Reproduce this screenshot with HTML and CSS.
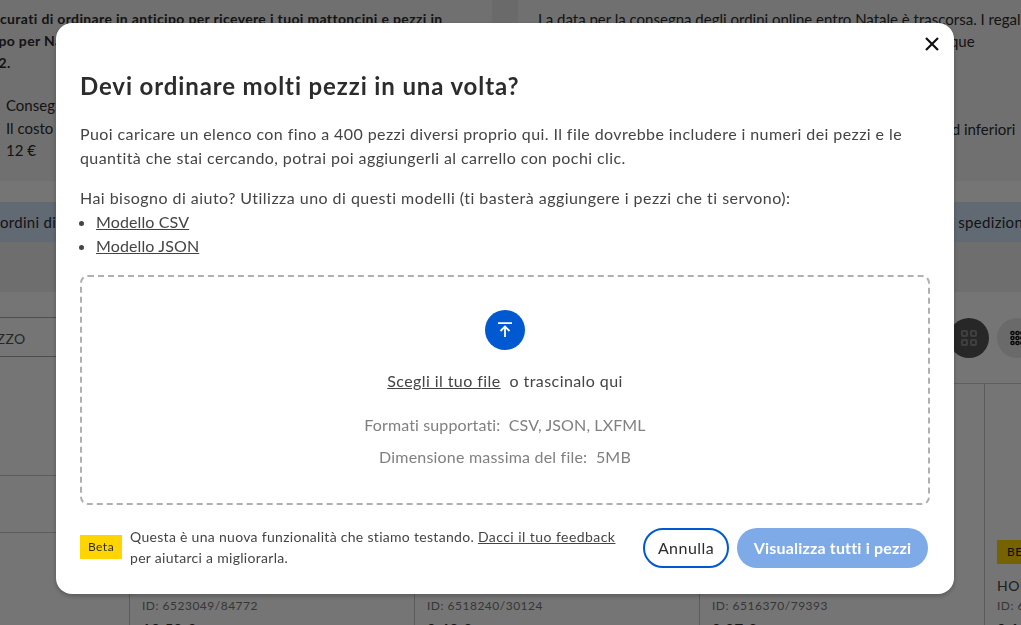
FILE: index.html
```html
<!DOCTYPE html>
<html lang="it">
<head>
    <meta charset="UTF-8">
    <meta name="viewport" content="width=device-width, initial-scale=1.0">
    <title>Devi ordinare molti pezzi in una volta?</title>
    <link rel="stylesheet" href="styles.css">
</head>
<body>

    <!-- Pagina dietro la modale -->
    <div class="page">
        <div class="notices">
            <div class="notice notice-left">
                <div class="notice-strong">
                    <p>Assicurati di ordinare in anticipo per ricevere i tuoi mattoncini e pezzi in</p>
                    <p>tempo per Natale.</p>
                    <p>2022.</p>
                </div>
                <div class="notice-small">
                    <p>Consegna</p>
                    <p>Il costo</p>
                    <p>12 €</p>
                </div>
            </div>
            <div class="notice notice-right">
                <p>La data per la consegna degli ordini online entro Natale è trascorsa. I regali</p>
                <p class="line-que">arriveranno comunque</p>
                <p class="line-inferiori">standard inferiori</p>
            </div>
        </div>
        <div class="info-band">
            <span>ordini di</span>
            <span>spedizioni</span>
        </div>
        <div class="toolbar-band"></div>
        <div class="shop">
            <div class="toolbar">
                <div class="search">Pezzo</div>
                <div class="view-buttons">
                    <span class="view-btn view-btn-on">
                        <svg width="16" height="16" viewBox="0 0 16 16" fill="none" stroke="#8a8a8a" stroke-width="2"><rect x="1" y="1" width="5" height="5" rx="1"/><rect x="10" y="1" width="5" height="5" rx="1"/><rect x="1" y="10" width="5" height="5" rx="1"/><rect x="10" y="10" width="5" height="5" rx="1"/></svg>
                    </span>
                    <span class="view-btn">
                        <svg width="14" height="16" viewBox="0 0 14 16" fill="none" stroke="#111" stroke-width="1.5"><circle cx="2.5" cy="3" r="1.6"/><circle cx="7.500" cy="3" r="1.6"/><circle cx="12.500" cy="3" r="1.6"/><circle cx="2.500" cy="8" r="1.6"/><circle cx="7.500" cy="8" r="1.6"/><circle cx="12.500" cy="8" r="1.6"/><circle cx="2.500" cy="13" r="1.6"/><circle cx="7.500" cy="13" r="1.6"/><circle cx="12.500" cy="13" r="1.6"/></svg>
                    </span>
                </div>
            </div>
            <div class="catalog">
                <div class="filters">
                    <div class="filter"></div>
                    <div class="filter"></div>
                    <div class="filter filter-last">
                        <svg width="14" height="9" viewBox="0 0 14 9" fill="none" stroke="#111" stroke-width="2"><path d="M1 1l6 6 6-6"/></svg>
                    </div>
                </div>
                <div class="products">
                    <div class="product"><p class="product-id">ID: 6523049/84772</p><p class="product-price">10,50 €</p></div>
                    <div class="product"><p class="product-id">ID: 6518240/30124</p><p class="product-price">0,42 €</p></div>
                    <div class="product"><p class="product-id">ID: 6516370/79393</p><p class="product-price">0,07 €</p></div>
                    <div class="product">
                        <span class="product-badge">BEST</span>
                        <p class="product-name">HOLDER</p>
                        <p class="product-id">ID: 6</p>
                        <p class="product-price">0,15 €</p>
                    </div>
                </div>
            </div>
        </div>
    </div>

    <div class="overlay"></div>

    <div class="modal">
        <button class="modal-close" aria-label="Chiudi">
            <svg width="14" height="14" viewBox="0 0 14 14" fill="none" stroke="#111" stroke-width="2.2"><path d="M1 1l12 12M13 1L1 13"/></svg>
        </button>
        <h1>Devi ordinare molti pezzi in una volta?</h1>
        <p class="modal-text">Puoi caricare un elenco con fino a 400 pezzi diversi proprio qui. Il file dovrebbe includere i numeri dei pezzi e le quantità che stai cercando, potrai poi aggiungerli al carrello con pochi clic.</p>
        <p class="modal-help">Hai bisogno di aiuto? Utilizza uno di questi modelli (ti basterà aggiungere i pezzi che ti servono):</p>
        <ul class="template-list">
            <li><a href="#">Modello CSV</a></li>
            <li><a href="#">Modello JSON</a></li>
        </ul>

        <div class="dropzone">
            <span class="upload-icon">
                <svg width="14" height="16" viewBox="0 0 14 16" fill="none" stroke="#fff" stroke-width="1.8"><path d="M0 1.200h14M7 15V5.500M2.500 9L7 4.500l4.500 4.500"/></svg>
            </span>
            <p class="drop-text"><a href="#">Scegli il tuo file</a>&nbsp; o trascinalo qui</p>
            <p class="drop-meta drop-formats">Formati supportati:&nbsp; CSV, JSON, LXFML</p>
            <p class="drop-meta">Dimensione massima del file:&nbsp; 5MB</p>
        </div>

        <div class="modal-footer">
            <div class="beta">
                <span class="beta-tag">Beta</span>
                <p>Questa è una nuova funzionalità che stiamo testando. <a href="#">Dacci il tuo feedback</a> per aiutarci a migliorarla.</p>
            </div>
            <div class="form-actions">
                <button class="btn-cancel">Annulla</button>
                <button class="btn-view">Visualizza tutti i pezzi</button>
            </div>
        </div>
    </div>

</body>
</html>
```

FILE: styles.css
```css
html, body {
    margin: 0;
    height: 100%;
    overflow: hidden;
}

body {
    font-family: Lato, "Liberation Sans", sans-serif;
    font-size: 16px;
    color: #2c2c2c;
    background-color: #fff;
}

p {
    margin: 0;
}

.page {
    height: 625px;
    overflow: hidden;
}

/* Avvisi in alto */
.notices {
    display: grid;
    grid-template-columns: 492px 1fr;
    height: 181px;
    background-color: #e8e8e8;
}

.notice {
    padding-top: 8px;
    line-height: 22px;
    font-size: 15px;
    white-space: nowrap;
    overflow: hidden;
    background-color: #f4f4f4;
}

.notice-right {
    margin-left: 26px;
    padding-left: 20px;
}

.notice-strong {
    margin-left: -27px;
    font-size: 14px;
    font-weight: 700;
    letter-spacing: 0.35px;
}

.notice-small {
    margin-top: 20px;
    padding-left: 6px;
    line-height: 22.5px;
}

.line-que {
    padding-left: 288px;
}

.line-inferiori {
    padding-left: 365px;
    margin-top: 66px;
}

.info-band {
    display: flex;
    justify-content: space-between;
    align-items: center;
    margin-top: 21px;
    height: 40px;
    background-color: #d4e6fa;
    font-size: 15px;
    letter-spacing: 0.3px;
    white-space: nowrap;
    overflow: hidden;
}

.info-band span:last-child {
    margin-right: -6px;
}

.toolbar-band {
    height: 50px;
    background-color: #efefef;
}

.shop {
    height: 333px;
}

.toolbar {
    display: flex;
    justify-content: space-between;
    align-items: center;
    height: 91px;
}

.search {
    width: 120px;
    margin-left: -21px;
    margin-top: -2px;
    height: 38px;
    line-height: 42px;
    border-top: 1px solid #aaa;
    border-bottom: 1px solid #aaa;
    font-size: 14px;
    letter-spacing: 0.5px;
    text-transform: uppercase;
    color: #555;
    overflow: hidden;
}

.view-buttons {
    display: flex;
    gap: 8px;
    margin-right: -16px;
}

.view-btn {
    width: 40px;
    height: 40px;
    border-radius: 50%;
    background-color: #e8e8e8;
    display: flex;
    align-items: center;
    justify-content: center;
}

.view-btn-on {
    background-color: #555;
}

.catalog {
    display: flex;
}

.filters {
    width: 129px;
    flex-shrink: 0;
}

.filter {
    height: 56px;
    border-bottom: 1px solid #c8c8c8;
}

.filter:first-child {
    height: 92px;
}

.filter-last {
    height: 36px;
    border-bottom: none;
    display: flex;
    align-items: center;
    justify-content: flex-end;
    padding-right: 38px;
    padding-top: 16px;
    box-sizing: border-box;
}

.products {
    display: grid;
    grid-template-columns: repeat(4, 285px);
    flex-shrink: 0;
    border-top: 1px solid #d0d0d0;
}

.product {
    border-left: 1px solid #c8c8c8;
    height: 241px;
    box-sizing: border-box;
    padding: 214px 12px 0;
    font-size: 12px;
    letter-spacing: 0.5px;
    color: #777;
    position: relative;
}

.product-id {
    line-height: 16px;
}

.product-price {
    font-size: 15px;
    font-weight: 700;
    color: #2c2c2c;
    margin-top: 6px;
}

.product-badge {
    position: absolute;
    left: 12px;
    top: 156px;
    width: 44px;
    height: 24px;
    line-height: 24px;
    padding-left: 10px;
    background-color: #ffd500;
    color: #222;
    font-size: 12px;
}

.product-name {
    position: absolute;
    left: 12px;
    top: 193px;
    font-size: 14px;
    color: #444;
}

/* Modale */
.overlay {
    position: fixed;
    inset: 0;
    background-color: rgba(0, 0, 0, 0.54);
}

.modal {
    position: fixed;
    left: 56px;
    top: 23px;
    width: 898px;
    height: 571px;
    box-sizing: border-box;
    padding: 47px 24px 0;
    background-color: #fff;
    border-radius: 16px;
    box-shadow: 0px 2px 5px rgba(0, 0, 0, 0.25);
}

.modal-close {
    position: absolute;
    top: 14px;
    right: 15px;
    width: 14px;
    height: 14px;
    padding: 0;
    border: none;
    background: none;
    display: flex;
}

h1 {
    margin: 0;
    font-size: 24px;
    line-height: 32px;
    font-weight: 700;
    letter-spacing: 0.88px;
    color: #2c2c2c;
}

.modal-text {
    margin-top: 20px;
    line-height: 24px;
    letter-spacing: 0.41px;
    color: #444;
}

.modal-help {
    margin-top: 16px;
    line-height: 24px;
    letter-spacing: 0.46px;
    color: #444;
}

.template-list {
    margin: 0;
    padding-left: 16px;
    line-height: 24px;
    letter-spacing: 0.12px;
    color: #444;
}

.template-list a,
.drop-text a,
.beta a {
    color: #444;
}

.dropzone {
    margin-top: 17px;
    height: 230px;
    box-sizing: border-box;
    border: 2px dashed #b0b0b0;
    border-radius: 8px;
    display: flex;
    flex-direction: column;
    align-items: center;
    padding-top: 33px;
}

.upload-icon {
    width: 40px;
    height: 40px;
    border-radius: 50%;
    background-color: #0059d1;
    display: flex;
    align-items: center;
    justify-content: center;
}

.drop-text {
    margin-top: 19px;
    line-height: 24px;
    letter-spacing: 0.42px;
    color: #444;
}

.drop-meta {
    line-height: 32px;
    letter-spacing: 0.2px;
    color: #808080;
}

.drop-formats {
    margin-top: 16px;
    letter-spacing: 0.12px;
}

.modal-footer {
    display: flex;
    justify-content: space-between;
    align-items: center;
    margin-top: 21px;
}

.beta {
    display: flex;
    align-items: center;
    gap: 8px;
    width: 540px;
    margin-bottom: 2px;
    font-size: 14px;
    line-height: 21px;
    letter-spacing: 0.3px;
    color: #444;
}

.beta a {
    letter-spacing: 0.45px;
}

.beta-tag {
    flex-shrink: 0;
    width: 42px;
    height: 24px;
    line-height: 24px;
    text-align: center;
    background-color: #ffd500;
    color: #2c2c2c;
    font-size: 12px;
    letter-spacing: 0.5px;
}

.form-actions {
    display: flex;
    gap: 8px;
    margin-right: 2px;
}

.form-actions button {
    height: 40px;
    padding: 0 0 2px;
    border-radius: 20px;
    font-family: inherit;
    font-size: 16px;
    cursor: pointer;
    box-sizing: border-box;
}

.btn-cancel {
    width: 86px;
    background-color: #fff;
    border: 2px solid #0059d1;
    color: #2c2c2c;
    letter-spacing: 0.45px;
}

.btn-view {
    width: 191px;
    background-color: #7faae8;
    border: none;
    color: #fff;
    font-weight: 700;
    letter-spacing: 0.17px;
}
```
